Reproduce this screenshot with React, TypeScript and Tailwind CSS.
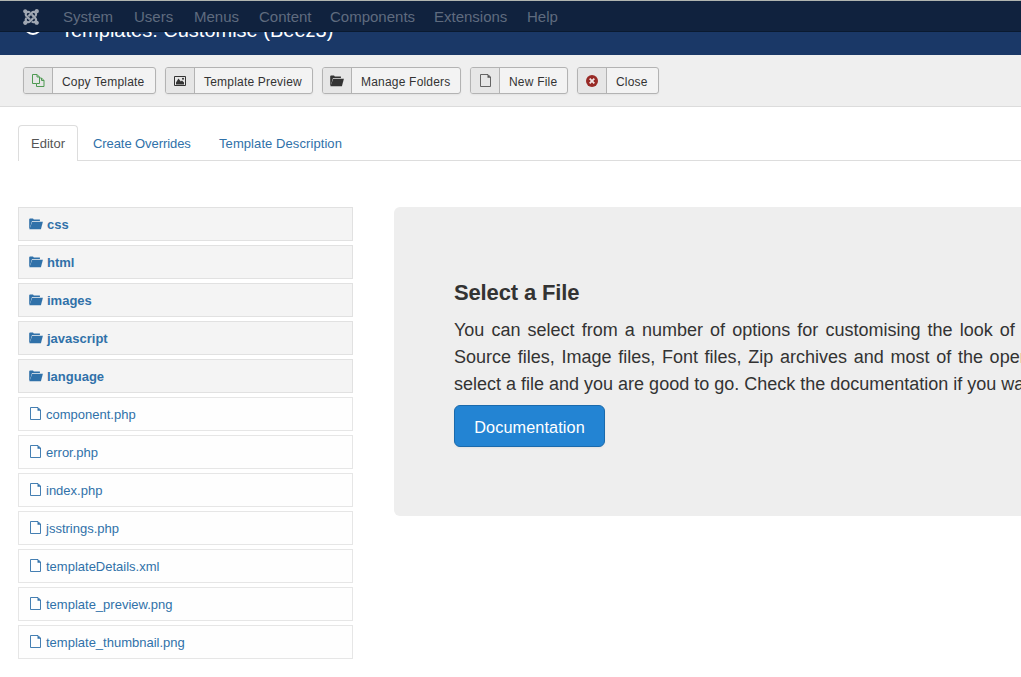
import type { ReactNode } from "react";
import { FaJoomla } from "react-icons/fa";

const FileIcon = ({ className = "" }: { className?: string }) => (
  <svg viewBox="0 0 13 13" className={"h-[13px] w-[13px] shrink-0 " + className} fill="none" stroke="currentColor">
    <path d="M1.500 .5h7.500l2.500 2.500v9.500h-10z" strokeWidth="0.9" />
    <path d="M8.500 .2l3.500 3.500H8.500z" fill="currentColor" stroke="none" />
  </svg>
);

const FolderIcon = ({ className = "" }: { className?: string }) => (
  <svg viewBox="0 0 14 12" className={"h-[12px] w-[14px] shrink-0 " + className} fill="currentColor">
    <path d="M0.200 11V1.200L.8 0.500h3.200l.8 1h6.100v1.400H3L.9 10z" />
    <path d="M3.200 3.700H13.900L11.900 11.200H.4z" />
  </svg>
);

const CopyIcon = () => (
  <svg viewBox="0 0 13 13" className="h-[13px] w-[13px] text-[#4f9a53]" fill="none" stroke="currentColor" strokeWidth="1">
    <path d="M4.500 9.500h-4v-9h4.500l2.500 2.500v1M5 .5v2.500h2.500" />
    <path d="M7.500 9.500h-3M4.500 9.500v3h7.500v-6l-2.500-2.500h-2v5.500M9.500 4v2.500h2.500" />
  </svg>
);

const ImageIcon = () => (
  <svg viewBox="0 0 12 10" className="h-[10px] w-[12px] text-[#333]" fill="none" stroke="currentColor">
    <path d="M.5 .5h11v9H.5z" />
    <path d="M2 8.500V6.500l2.500-4 2.300 3L8 4.500l2 2v2z" fill="currentColor" stroke="none" />
    <circle cx="9" cy="2.800" r="1" fill="currentColor" stroke="none" />
  </svg>
);

const CloseIcon = () => (
  <svg viewBox="0 0 12 12" className="h-[12px] w-[12px]">
    <circle cx="6" cy="6" r="6" fill="#982a26" />
    <path d="M3.700 3.700l4.600 4.600M8.300 3.700L3.700 8.300" stroke="#f0e6e6" strokeWidth="1.800" />
  </svg>
);

const menu = [
  { label: "System", width: "w-[71px]" },
  { label: "Users", width: "w-[60px]" },
  { label: "Menus", width: "w-[65px]" },
  { label: "Content", width: "w-[71px]" },
  { label: "Components", width: "w-[104px]" },
  { label: "Extensions", width: "w-[93px]" },
  { label: "Help", width: "w-[40px]" },
];

const buttons: { label: string; width: string; icon: ReactNode }[] = [
  { label: "Copy Template", width: "w-[133px]", icon: <CopyIcon /> },
  { label: "Template Preview", width: "w-[148px]", icon: <ImageIcon /> },
  { label: "Manage Folders", width: "w-[139px]", icon: <FolderIcon className="w-[12px] text-[#333]" /> },
  { label: "New File", width: "w-[98px]", icon: <FileIcon className="text-[#555]" /> },
  { label: "Close", width: "w-[82px]", icon: <CloseIcon /> },
];

const folders = ["css", "html", "images", "javascript", "language"];
const files = [
  "component.php",
  "error.php",
  "index.php",
  "jsstrings.php",
  "templateDetails.xml",
  "template_preview.png",
  "template_thumbnail.png",
];

export default function App() {
  return (
    <div className="h-[677px] w-full overflow-hidden bg-white font-['Liberation_Sans',Arial,sans-serif] text-[13px] text-[#333]">
      <nav className="flex h-8 items-center border-t border-b border-t-[#b0b5b0] border-b-[#0a1a30] bg-[#10223e] pl-[22px] text-[15px] text-[#5f6b7e]">
        <FaJoomla className="mt-[2px] mr-[23px] size-[18px] shrink-0 text-[#a0a7b2]" />
        {menu.map((m) => (
          <a key={m.label} className={"shrink-0 pt-[2px] whitespace-nowrap " + m.width}>{m.label}</a>
        ))}
      </nav>
      <header className="flex h-[23px] overflow-hidden bg-[#1a3867] pl-[24px] text-white">
        <span className="-mt-[15px] mr-[19px] size-[18px] shrink-0 rounded-full border-[2.500px] border-white" />
        <h1 className="-mt-[15px] whitespace-nowrap text-[20px] leading-[26px]">Templates: Customise (Beez3)</h1>
      </header>
      <div className="flex h-[52px] gap-[9px] border-b border-[#dcdcdc] bg-[#efefef] pt-3 pl-[23px]">
        {buttons.map((b) => (
          <button
            key={b.label}
            className={"flex h-[27px] shrink-0 overflow-hidden rounded-[3px] border border-[#b3b3b3] bg-[#f3f3f3] text-[12px] shadow-[0_1px_2px_rgba(0,0,0,0.05)] " + b.width}
          >
            <span className="flex h-full w-[29px] shrink-0 items-center justify-center border-r border-[#b3b3b3] bg-[#e6e6e6]">{b.icon}</span>
            <span className="pt-px pl-[9px] tracking-[0.2px] whitespace-nowrap leading-[26px]">{b.label}</span>
          </button>
        ))}
      </div>
      <main className="pt-[18px] pl-[18px]">
        <div className="flex h-9 border-b border-[#ddd] leading-[36px] text-[#3071a9]">
          <div className="h-9 w-[60px] shrink-0 rounded-t-[4px] border border-b-0 border-[#ddd] bg-white text-center text-[#555]">Editor</div>
          <div className="w-[141px] shrink-0 pt-px pl-[15px] tracking-[-0.08px]">Create Overrides</div>
          <div className="pt-px tracking-[0.08px] whitespace-nowrap">Template Description</div>
        </div>
        <div className="mt-[46px] flex items-start gap-[41px]">
          <ul className="flex w-[335px] shrink-0 flex-col gap-1 text-[#3071a9]">
            {folders.map((f) => (
              <li key={f} className="flex h-[34px] items-center border border-[#e1e1e1] bg-[#f4f4f4] pl-[10px] font-bold">
                <FolderIcon className="mr-[4px]" />
                <span className="pt-[2px]">{f}</span>
              </li>
            ))}
            {files.map((f) => (
              <li key={f} className="flex h-[34px] items-center border border-[#e6e6e6] bg-[#fefefe] pl-[10px]">
                <FileIcon className="-mt-px mr-[4px]" />
                <span className="pt-[2px]">{f}</span>
              </li>
            ))}
          </ul>
          <section className="h-[309px] flex-1 overflow-hidden rounded-l-[6px] bg-[#eee] pt-[71px] pl-[60px]">
            <h2 className="text-[22px] leading-[30px] font-bold tracking-[-0.15px]">Select a File</h2>
            <div className="mt-[9px] text-[18px] leading-[27px] whitespace-nowrap">
              <p className="[word-spacing:2.100px]">You can select from a number of options for customising the look of</p>
              <p className="[word-spacing:1.700px]">Source files, Image files, Font files, Zip archives and most of the open</p>
              <p>select a file and you are good to go. Check the documentation if you want</p>
            </div>
            <button className="mt-[7px] h-[42px] w-[151px] rounded-[6px] border border-[#1a6aac] bg-[#2384d3] text-[16.250px] leading-[42px] tracking-[0.1px] text-white shadow-[0_1px_2px_rgba(0,0,0,0.05)]">Documentation</button>
          </section>
        </div>
      </main>
    </div>
  );
}
